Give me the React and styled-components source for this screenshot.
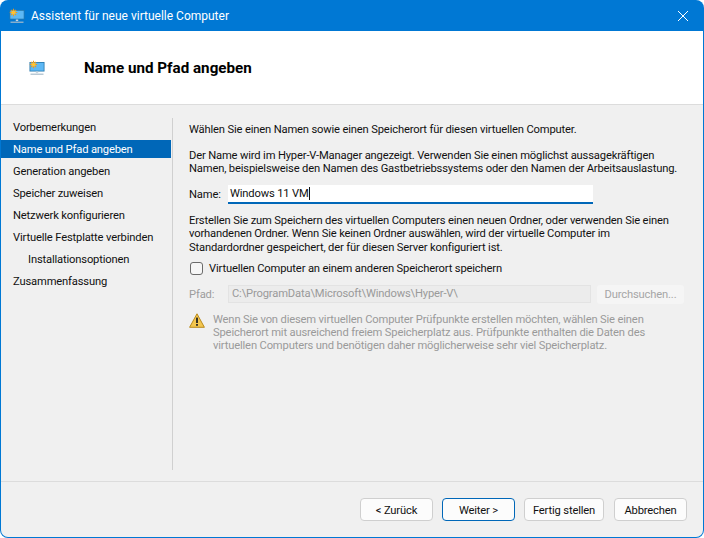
import React from "react";
import styled, { createGlobalStyle } from "styled-components";

const steps = [
	{ label: "Vorbemerkungen" },
	{ label: "Name und Pfad angeben", active: true },
	{ label: "Generation angeben" },
	{ label: "Speicher zuweisen" },
	{ label: "Netzwerk konfigurieren" },
	{ label: "Virtuelle Festplatte verbinden" },
	{ label: "Installationsoptionen", sub: true },
	{ label: "Zusammenfassung" },
];

function VmIcon({ size }) {
	return (
		<svg width={size} height={size} viewBox="0 0 16 16">
			<rect x="0.5" y="2" width="15" height="9.5" fill="#2576ab" />
			<rect x="1.3" y="2.8" width="13.4" height="7.9" fill="#5db8f5" />
			<rect x="6.8" y="11.5" width="2.4" height="1.6" fill="#c9d6df" />
			<rect x="1.5" y="13.6" width="13" height="1.2" fill="#a9bccb" />
			<g stroke="#ee9a18" strokeWidth="1.1">
				<path d="M4.5 .8v7.4M.8 4.5h7.4M1.9 1.9l5.2 5.2M7.1 1.9l-5.2 5.2" />
			</g>
			<circle cx="4.5" cy="4.5" r="2.1" fill="#ffc233" />
		</svg>
	);
}

function WarningIcon() {
	return (
		<svg width="16" height="15" viewBox="0 0 16 15">
			<path d="M8 .8 15.4 14.3H.6Z" fill="#f3c64f" stroke="#b98a1c" strokeWidth="1" strokeLinejoin="round" />
			<rect x="7.1" y="4.6" width="1.8" height="5.4" fill="#222" />
			<rect x="7.1" y="11" width="1.8" height="1.8" fill="#222" />
		</svg>
	);
}

function App() {
	return (
		<>
			<GlobalStyle />
			<Window>
				<TitleBar>
					<TitleGroup>
						<VmIcon size={16} />
						<TitleText>Assistent für neue virtuelle Computer</TitleText>
					</TitleGroup>
					<CloseIcon width="10" height="10" viewBox="0 0 10 10">
						<path d="M0 0 10 10M10 0 0 10" stroke="#fff" strokeWidth="1" />
					</CloseIcon>
				</TitleBar>
				<Inner>
					<Header>
						<VmIcon size={16} />
						<HeaderTitle>Name und Pfad angeben</HeaderTitle>
					</Header>
					<Body>
						<Sidebar>
							{steps.map((step) => (
								<Step key={step.label} $active={step.active} $sub={step.sub}>
									{step.label}
								</Step>
							))}
						</Sidebar>
						<Main>
							<Para $after="12.6px">Wählen Sie einen Namen sowie einen Speicherort für diesen virtuellen Computer.</Para>
							<Para $after="9px">
								Der Name wird im Hyper-V-Manager angezeigt. Verwenden Sie einen möglichst aussagekräftigen
								<br />
								Namen, beispielsweise den Namen des Gastbetriebssystems oder den Namen der Arbeitsauslastung.
							</Para>
							<FieldRow>
								<FieldLabel>Name:</FieldLabel>
								<NameField>
									Windows 11 VM
									<Caret />
								</NameField>
							</FieldRow>
							<Para $after="6.5px">
								Erstellen Sie zum Speichern des virtuellen Computers einen neuen Ordner, oder verwenden Sie einen
								<br />
								vorhandenen Ordner. Wenn Sie keinen Ordner auswählen, wird der virtuelle Computer im
								<br />
								Standardordner gespeichert, der für diesen Server konfiguriert ist.
							</Para>
							<CheckRow>
								<CheckBox />
								<span>Virtuellen Computer an einem anderen Speicherort speichern</span>
							</CheckRow>
							<FieldRow>
								<FieldLabel $disabled>Pfad:</FieldLabel>
								<PathField>C:\ProgramData\Microsoft\Windows\Hyper-V\</PathField>
								<BrowseButton>Durchsuchen...</BrowseButton>
							</FieldRow>
							<WarningRow>
								<WarningIcon />
								<WarningText>
									Wenn Sie von diesem virtuellen Computer Prüfpunkte erstellen möchten, wählen Sie einen
									<br />
									Speicherort mit ausreichend freiem Speicherplatz aus. Prüfpunkte enthalten die Daten des
									<br />
									virtuellen Computers und benötigen daher möglicherweise sehr viel Speicherplatz.
								</WarningText>
							</WarningRow>
						</Main>
					</Body>
					<Footer>
						<Button>&lt; Zurück</Button>
						<Button $primary>Weiter &gt;</Button>
						<Button $width="80px">Fertig stellen</Button>
						<Button $gap>Abbrechen</Button>
					</Footer>
				</Inner>
			</Window>
		</>
	);
}

export default App;

const GlobalStyle = createGlobalStyle`
	html, body {
		margin: 0;
		padding: 0;
		background: #fff;
	}
	body {
		font-family: Roboto, "Open Sans", "Liberation Sans", sans-serif;
		font-size: 11.2px;
		letter-spacing: -0.16px;
		color: #111;
	}
`;

const Window = styled.div`
	display: flex;
	flex-direction: column;
	width: 704px;
	height: 538px;
	box-sizing: border-box;
	overflow: hidden;
	background: #0078d4;
	border-radius: 8px;
`;

const TitleBar = styled.div`
	display: flex;
	align-items: center;
	justify-content: space-between;
	flex: 0 0 31px;
	padding: 0 16px 0 9px;
	color: #fff;
`;

const TitleGroup = styled.div`
	display: flex;
	align-items: center;
	gap: 6px;
`;

const TitleText = styled.span`
	font-size: 12px;
	letter-spacing: 0;
`;

const CloseIcon = styled.svg`
	display: block;
`;

const Inner = styled.div`
	display: flex;
	flex-direction: column;
	flex: 1;
	min-height: 0;
	margin: 0 1px 1px 1px;
	background: #f0f0f0;
	border-radius: 0 0 7px 7px;
	overflow: hidden;
`;

const Header = styled.div`
	display: flex;
	align-items: center;
	gap: 39px;
	flex: 0 0 74px;
	box-sizing: border-box;
	padding: 1px 0 0 28px;
	background: #fff;
	border-bottom: 1px solid #dcdcdc;
`;

const HeaderTitle = styled.h1`
	margin: 0;
	font-size: 15.2px;
	font-weight: 700;
	letter-spacing: 0;
	color: #000;
`;

const Body = styled.div`
	display: flex;
	flex: 1;
	min-height: 0;
	padding-top: 13px;
	padding-bottom: 11px;
`;

const Sidebar = styled.div`
	display: flex;
	flex-direction: column;
	gap: 4px;
	box-sizing: border-box;
	flex: 0 0 172px;
	padding-right: 1px;
	border-right: 1px solid #d0d0d0;
`;

const Step = styled.div`
	height: 18px;
	line-height: 20px;
	padding-left: ${(p) => (p.$sub ? "27px" : "12px")};
	background: ${(p) => (p.$active ? "#0067b8" : "transparent")};
	color: ${(p) => (p.$active ? "#fff" : "#111")};
`;

const Main = styled.div`
	flex: 1;
	padding-top: 5px;
	padding-left: 16px;
	padding-right: 18px;
`;

const Para = styled.p`
	margin: 0 0 ${(p) => p.$after} 0;
	line-height: 13.4px;
	white-space: nowrap;
`;

const FieldRow = styled.div`
	display: flex;
	align-items: center;
	height: 19px;
	margin-bottom: 10px;
`;

const FieldLabel = styled.span`
	flex: 0 0 39px;
	color: ${(p) => (p.$disabled ? "#9d9d9d" : "#111")};
`;

const NameField = styled.div`
	display: flex;
	align-items: center;
	box-sizing: border-box;
	width: 365px;
	height: 19px;
	padding-left: 2px;
	background: #fff;
	border-bottom: 1px solid #0067b8;
	box-shadow: inset 0 -1px 0 #0067b8;
`;

const Caret = styled.span`
	display: inline-block;
	width: 1px;
	height: 13px;
	background: #111;
`;

const CheckRow = styled.div`
	display: flex;
	align-items: center;
	gap: 6px;
	height: 16px;
	margin-bottom: 8px;
`;

const CheckBox = styled.span`
	display: block;
	box-sizing: border-box;
	width: 13px;
	height: 13px;
	margin-left: 1px;
	background: #f6f6f6;
	border: 1px solid #6b6b6b;
	border-radius: 3px;
`;

const PathField = styled.div`
	box-sizing: border-box;
	width: 363px;
	height: 18px;
	line-height: 16px;
	padding-left: 3px;
	background: #ececec;
	border: 1px solid #e3e3e3;
	color: #9a9a9a;
`;

const BrowseButton = styled.div`
	box-sizing: border-box;
	width: 87px;
	height: 19px;
	margin-left: 6px;
	line-height: 19px;
	text-align: center;
	background: #f5f5f5;
	border-radius: 3px;
	color: #a6a6a6;
`;

const WarningRow = styled.div`
	display: flex;
	gap: 8px;
	margin-top: -1px;
`;

const WarningText = styled.div`
	line-height: 13.3px;
	white-space: nowrap;
	color: #9a9a9a;
`;

const Footer = styled.div`
	display: flex;
	justify-content: flex-end;
	align-items: flex-start;
	gap: 9px;
	flex: 0 0 56px;
	box-sizing: border-box;
	padding: 16px 16px 0 0;
	border-top: 1px solid #dcdcdc;
`;

const Button = styled.button`
	box-sizing: border-box;
	width: ${(p) => p.$width || "73px"};
	height: 23px;
	margin-left: ${(p) => (p.$gap ? "1px" : "0")};
	padding: 1px 0 0 0;
	font: inherit;
	letter-spacing: inherit;
	color: #111;
	background: #fcfcfc;
	border: 1px solid ${(p) => (p.$primary ? "#0067b8" : "#cfcfcf")};
	border-radius: 4px;
`;
